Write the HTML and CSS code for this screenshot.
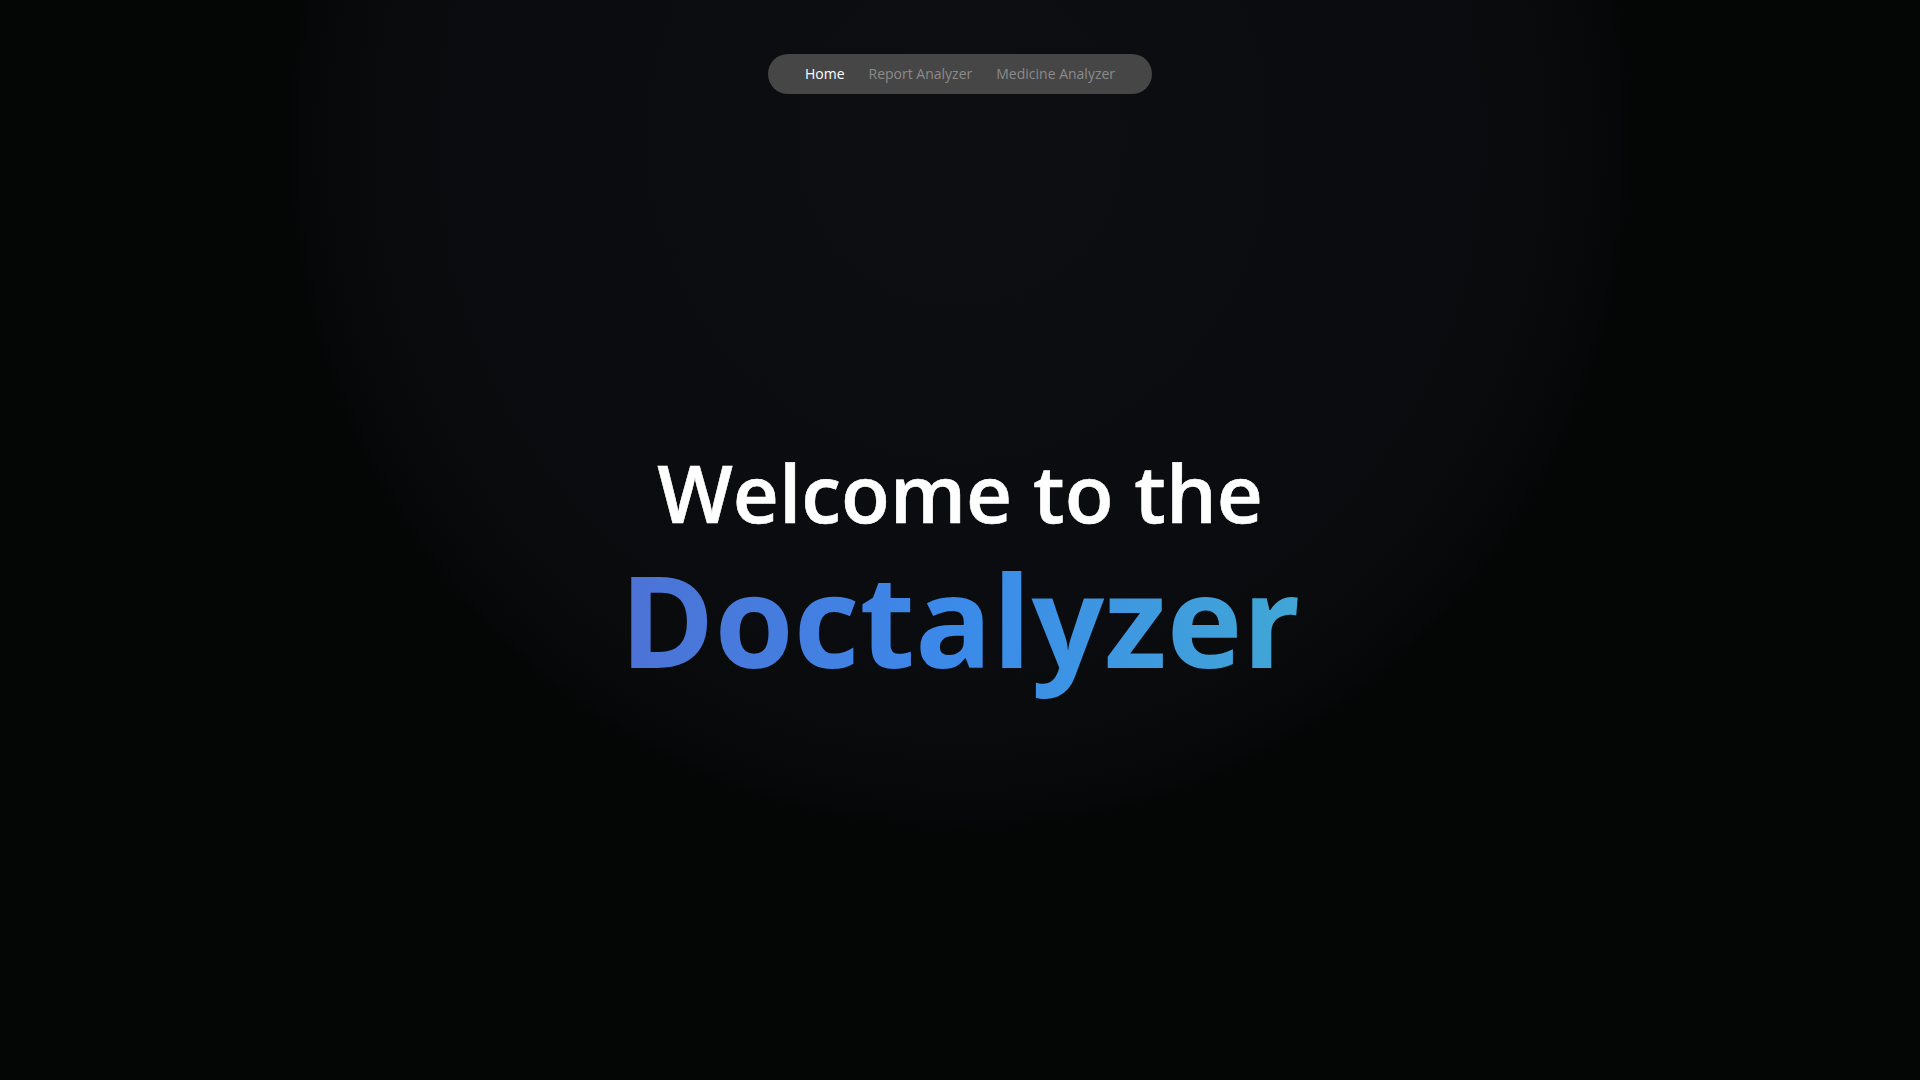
FILE: index.html
```html
<!doctype html>
<html lang="en">
  <head>
    <meta charset="UTF-8" />
    <meta name="viewport" content="width=device-width, initial-scale=1.0" />
    <title>Doctalyzer</title>
    <link rel="stylesheet" href="styles.css">
  </head>
  <body>
    <!-- Navbar -->
    <header class="top-bar">
      <nav class="nav-pill">
        <a href="#" class="nav-link active">Home</a>
        <a href="#" class="nav-link">Report Analyzer</a>
        <a href="#" class="nav-link">Medicine Analyzer</a>
      </nav>
    </header>

    <!-- Hero -->
    <main class="hero">
      <h1 class="hero-title">Welcome to the</h1>
      <h2 class="hero-brand">Doctalyzer</h2>
    </main>
  </body>
</html>
```

FILE: styles.css
```css
/* General Styling */
html,
body {
  margin: 0;
  padding: 0;
}

body {
  font-family: "Open Sans", "Noto Sans", sans-serif;
  min-height: 100vh;
  background-color: #030404;
  background-image: radial-gradient(
    ellipse 672px 690px at 50% 140px,
    #0c0e11 0%,
    #0b0c0f 70%,
    #0a0b0d 84%,
    #08090b 92%,
    #060708 98%,
    #040505 100%
  );
  background-repeat: no-repeat;
  color: #fff;
  overflow: hidden;
}

/* Navbar */
.top-bar {
  display: flex;
  justify-content: center;
  padding-top: 54px;
}

.nav-pill {
  display: flex;
  align-items: center;
  gap: 24px;
  height: 40px;
  padding: 0 37px 1px;
  box-sizing: border-box;
  background-color: #474646;
  border-radius: 20px;
}

.nav-link {
  font-size: 14px;
  color: #8a8a8a;
  text-decoration: none;
}

.nav-link.active {
  color: #fff;
}

/* Hero */
.hero {
  display: flex;
  flex-direction: column;
  align-items: center;
  padding-top: 350px;
}

.hero-title {
  margin: 0;
  font-size: 80px;
  font-weight: 600;
  line-height: 1.2;
  color: #fff;
  -webkit-text-stroke: 0.6px #fff;
}

.hero-brand {
  margin: 2px 0 0;
  padding-bottom: 10px;
  font-size: 128px;
  font-weight: 700;
  line-height: 1.2;
  background: linear-gradient(90deg, #4d72d5 0%, #3b8aea 50%, #41a7d5 100%);
  -webkit-background-clip: text;
  background-clip: text;
  color: transparent;
}
```
